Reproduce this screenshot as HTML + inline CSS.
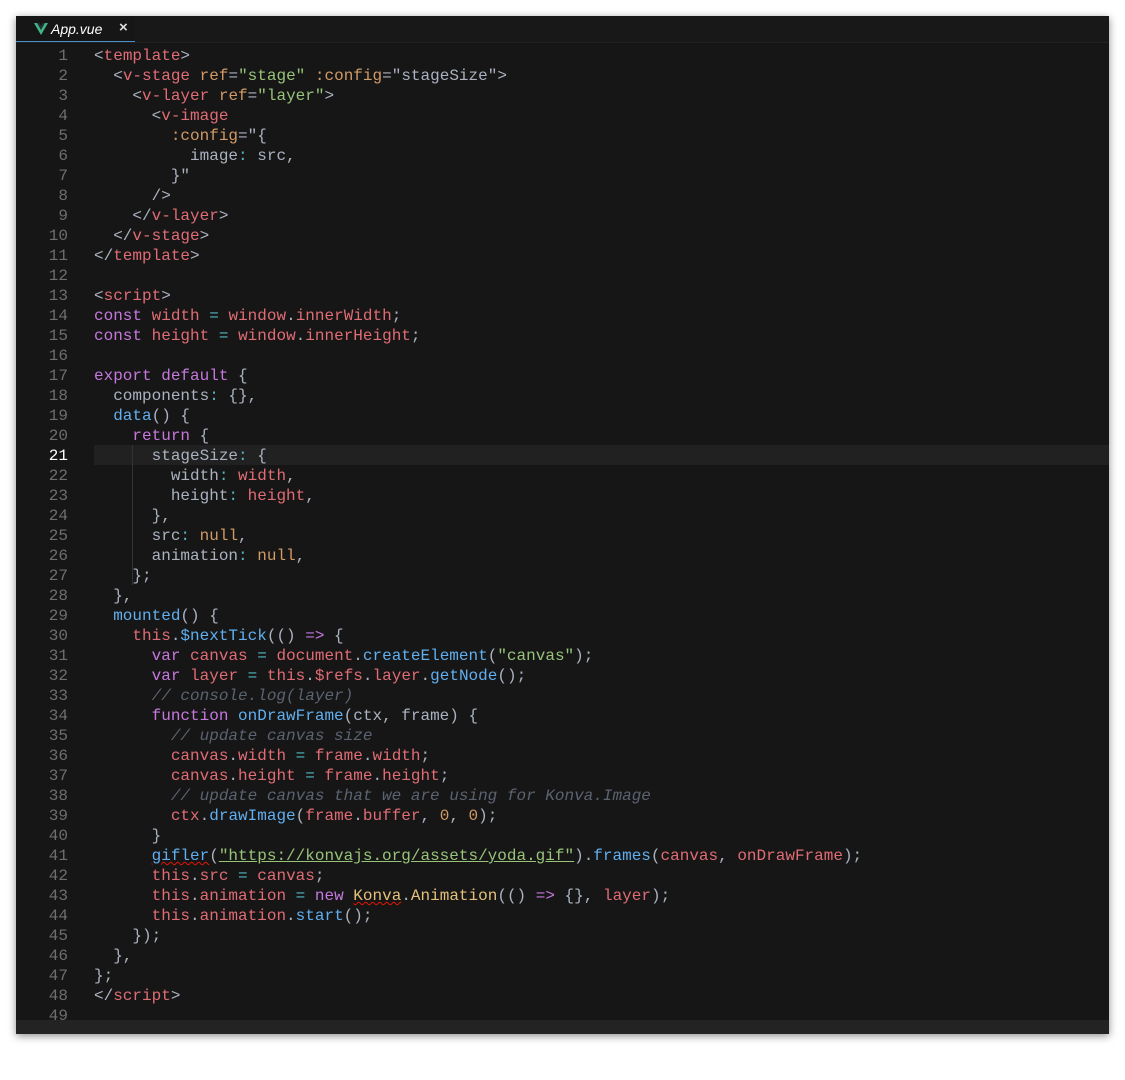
<!DOCTYPE html>
<html><head><meta charset="utf-8"><style>
html,body{margin:0;padding:0;background:#fff;width:1125px;height:1080px;overflow:hidden}
#win{position:absolute;left:16px;top:16px;width:1093px;height:1018px;background:#161616;box-shadow:0 2px 8px rgba(0,0,0,.45);overflow:hidden}
#tabs{position:absolute;left:0;top:0;width:100%;height:26px;background:#181818;border-bottom:1px solid #222}
#tab{position:absolute;left:0;top:0;width:119px;height:26px;background:#161616;border-bottom:1px solid #4a90c8;box-sizing:border-box}
#tab .n{position:absolute;left:35px;top:5px;font:italic 14px "Liberation Sans",sans-serif;color:#fff}
#tab .x{position:absolute;left:103px;top:3px;font:bold 15px "Liberation Sans",sans-serif;color:#ddd}
#hl{position:absolute;left:78px;top:429px;width:1015px;height:20px;background:#212121}
#sb{position:absolute;left:0;top:1004px;width:100%;height:14px;background:#232323}
pre{margin:0;position:absolute;top:30px;font:16px/20px "Liberation Mono",monospace;color:#abb2bf}
#ln{left:0;width:52px;text-align:right;color:#6e6e6e}
#code{left:78px}
.r{color:#e06c75}.p{color:#c678dd}.b{color:#61afef}.g{color:#98c379}.o{color:#d19a66}.c{color:#56b6c2}.y{color:#e5c07b}.k{color:#5c6370;font-style:italic}.w{color:#abb2bf}
.u{text-decoration:underline wavy #e51400;text-decoration-thickness:1px}
.gu{text-decoration:underline #98c379}
.ig{position:absolute;width:1px;background:#333}
</style></head><body>
<div id="win">
<div id="tabs"><div id="tab"><svg style="position:absolute;left:18px;top:7px" width="14" height="12" viewBox="0 0 14 12"><path d="M0 0h3l4 7 4-7h3L7 12z" fill="#41b883"/><path d="M3 0h2.5L7 3 8.5 0H11L7 7z" fill="#35495e" opacity=".5"/></svg><span class="n">App.vue</span><span class="x">×</span></div></div>
<div id="hl"></div>
<div class="ig" style="left:116px;top:429px;height:140px"></div>
<pre id="ln"><script>for(var i=1;i<=49;i++)document.write(i==21?'<span style="color:#fff">'+i+'</span>\n':i+'\n');</script></pre>
<pre id="code"><span class="w">&lt;</span><span class="r">template</span><span class="w">&gt;</span>
  <span class="w">&lt;</span><span class="r">v-stage</span> <span class="o">ref</span>=<span class="g">"stage"</span> <span class="o">:config</span>=<span class="w">"stageSize"</span>&gt;
    &lt;<span class="r">v-layer</span> <span class="o">ref</span>=<span class="g">"layer"</span>&gt;
      &lt;<span class="r">v-image</span>
        <span class="o">:config</span>=<span class="w">"{</span>
          image<span class="c">:</span> src,
        }"
      /&gt;
    &lt;/<span class="r">v-layer</span>&gt;
  &lt;/<span class="r">v-stage</span>&gt;
&lt;/<span class="r">template</span>&gt;

&lt;<span class="r">script</span>&gt;
<span class="p">const</span> <span class="r">width</span> <span class="c">=</span> <span class="r">window</span>.<span class="r">innerWidth</span>;
<span class="p">const</span> <span class="r">height</span> <span class="c">=</span> <span class="r">window</span>.<span class="r">innerHeight</span>;

<span class="p">export</span> <span class="p">default</span> {
  components<span class="c">:</span> {},
  <span class="b">data</span>() {
    <span class="p">return</span> {
      stageSize<span class="c">:</span> {
        width<span class="c">:</span> <span class="r">width</span>,
        height<span class="c">:</span> <span class="r">height</span>,
      },
      src<span class="c">:</span> <span class="o">null</span>,
      animation<span class="c">:</span> <span class="o">null</span>,
    };
  },
  <span class="b">mounted</span>() {
    <span class="r">this</span>.<span class="b">$nextTick</span>(() <span class="p">=&gt;</span> {
      <span class="p">var</span> <span class="r">canvas</span> <span class="c">=</span> <span class="r">document</span>.<span class="b">createElement</span>(<span class="g">"canvas"</span>);
      <span class="p">var</span> <span class="r">layer</span> <span class="c">=</span> <span class="r">this</span>.<span class="r">$refs</span>.<span class="r">layer</span>.<span class="b">getNode</span>();
      <span class="k">// console.log(layer)</span>
      <span class="p">function</span> <span class="b">onDrawFrame</span>(ctx, frame) {
        <span class="k">// update canvas size</span>
        <span class="r">canvas</span>.<span class="r">width</span> <span class="c">=</span> <span class="r">frame</span>.<span class="r">width</span>;
        <span class="r">canvas</span>.<span class="r">height</span> <span class="c">=</span> <span class="r">frame</span>.<span class="r">height</span>;
        <span class="k">// update canvas that we are using for Konva.Image</span>
        <span class="r">ctx</span>.<span class="b">drawImage</span>(<span class="r">frame</span>.<span class="r">buffer</span>, <span class="o">0</span>, <span class="o">0</span>);
      }
      <span class="b u">gifler</span>(<span class="g gu">"https://konvajs.org/assets/yoda.gif"</span>).<span class="b">frames</span>(<span class="r">canvas</span>, <span class="r">onDrawFrame</span>);
      <span class="r">this</span>.<span class="r">src</span> <span class="c">=</span> <span class="r">canvas</span>;
      <span class="r">this</span>.<span class="r">animation</span> <span class="c">=</span> <span class="p">new</span> <span class="y u">Konva</span>.<span class="y">Animation</span>(() <span class="p">=&gt;</span> {}, <span class="r">layer</span>);
      <span class="r">this</span>.<span class="r">animation</span>.<span class="b">start</span>();
    });
  },
};
&lt;/<span class="r">script</span>&gt;
</pre>
<div id="sb"></div>
</div>
</body></html>
